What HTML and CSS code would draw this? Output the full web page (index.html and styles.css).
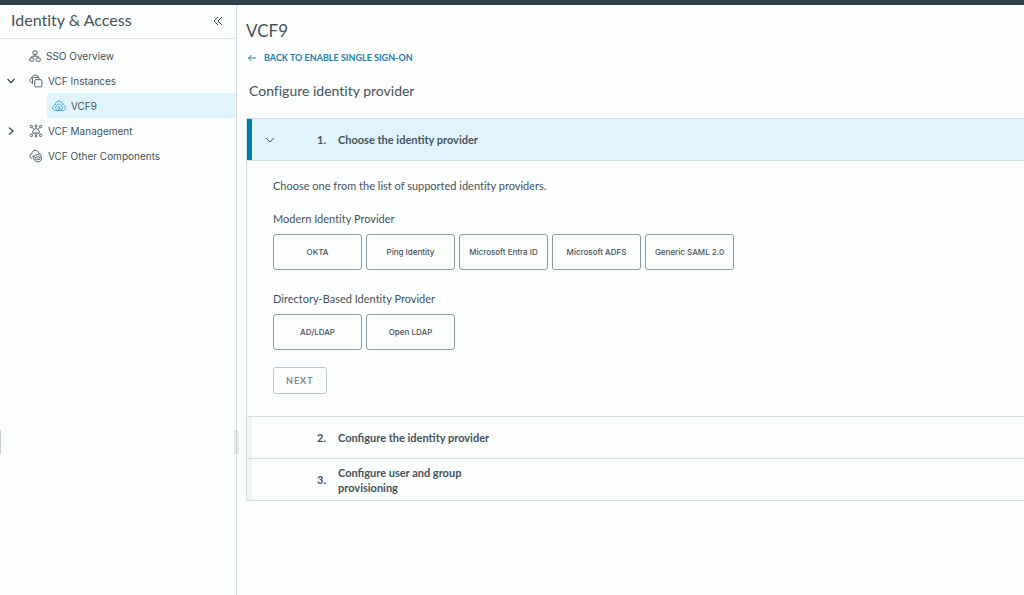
FILE: index.html
```html
<!DOCTYPE html>
<html lang="en">
<head>
  <meta charset="UTF-8">
  <meta name="viewport" content="width=device-width, initial-scale=1.0">
  <title>Identity &amp; Access</title>
  <link rel="stylesheet" href="styles.css">
</head>
<body>
  <div class="topbar"></div>

  <div class="layout">
    <aside class="sidebar">
      <div class="sidebar-header">
        <h2>Identity &amp; Access</h2>
        <button class="icon-btn" aria-label="Collapse">
          <svg width="10" height="10" viewBox="0 0 10 10"><path d="M5 1 1 5l4 4M9 1 5 5l4 4"/></svg>
        </button>
      </div>

      <nav class="tree">
        <div class="row">
          <a href="#" class="node">
            <svg width="12" height="12" viewBox="0 0 12 12"><rect x="4" y="1" width="4" height="3.5" rx=".6"/><rect x=".8" y="8" width="4" height="3.2" rx=".6"/><rect x="7.2" y="8" width="4" height="3.2" rx=".6"/><path d="M6 4.5v1.7M2.8 8V6.2h6.4V8"/></svg>
            SSO Overview
          </a>
        </div>
        <div class="row">
          <button class="icon-btn caret" aria-label="Collapse VCF Instances">
            <svg width="10" height="10" viewBox="0 0 10 10"><path d="m1.5 3 3.5 3.7L8.500 3"/></svg>
          </button>
          <a href="#" class="node">
            <svg width="14" height="14" viewBox="0 0 14 14"><path d="M3 8.500C.2 8.200.2 4.800 2.600 4.500 2.800.4 8.400.1 9.200 3"/><path d="M3.500 10V4.200q0-.8.8-.8h5.200q.8 0 .8.8v1"/><rect x="5.700" y="5.700" width="7.200" height="7.200" rx="1"/></svg>
            VCF Instances
          </a>
        </div>
        <a href="#" class="node selected">
          <svg width="14" height="14" viewBox="0 0 14 14"><path d="M3.500 11.500C-.4 11-.1 6.200 3.100 6 3.500.8 10.300.8 10.900 6c3.200.2 3.500 5 0 5.500z"/><path d="M4.500 10C2.800 9.500 3 7.500 4.600 7.400 4.800 4.200 9.200 4.200 9.400 7.400c1.600.1 1.800 2.100.2 2.600z"/><circle cx="7" cy="8.200" r=".7"/></svg>
          VCF9
        </a>
        <div class="row">
          <button class="icon-btn caret" aria-label="Expand VCF Management">
            <svg width="10" height="10" viewBox="0 0 10 10"><path d="m3 1.500 4 3.500-4 3.500"/></svg>
          </button>
          <a href="#" class="node">
            <svg width="14" height="14" viewBox="0 0 14 14"><circle cx="2.300" cy="2.500" r="1.200"/><circle cx="7" cy="2" r="1"/><circle cx="11.700" cy="2.500" r="1.200"/><circle cx="2.300" cy="11.500" r="1.200"/><circle cx="7" cy="12.200" r=".9"/><circle cx="11.700" cy="11.500" r="1.200"/><path d="M4.500 9c-1.600-.3-1.400-2.200 0-2.300.3-2.600 4.700-2.600 5 0 1.400.1 1.600 2 0 2.300zM3.200 3.400l1.800 2M10.800 3.400 9 5.400M3.200 10.600l1.400-1.500M10.800 10.600 9.400 9.100M7 3v1.700M7 9v2.300"/></svg>
            VCF Management
          </a>
        </div>
        <div class="row">
          <a href="#" class="node">
            <svg width="14" height="14" viewBox="0 0 14 14"><path d="M3.300 9.500C.1 9.300.1 5 2.900 4.900 3 .2 9.300.2 9.800 4.300c1.300.1 2.200.8 2.500 1.800"/><path d="M4.800 8.300C5.500 4.800 11.600 4.600 12.400 8.300c.8 3.200-1.200 4.500-3.400 4.500S4.500 11.500 4.800 8.300z"/><rect x="6.300" y="8" width="4.800" height="2.700" rx="1.200"/><path d="M3.300 7.300h2.200M7.900 9.200v.4M9.600 9.200v.4"/></svg>
            VCF Other Components
          </a>
        </div>
      </nav>
      <span class="edge-mark"></span>
      <span class="resize-handle"></span>
    </aside>

    <main class="content">
      <h1>VCF9</h1>
      <a href="#" class="back-link">
        <svg width="8" height="8" viewBox="0 0 8 8"><path d="M8 4H.7M3.500 1 .6 4l2.900 3"/></svg>
        BACK TO ENABLE SINGLE SIGN-ON
      </a>
      <h3>Configure identity provider</h3>

      <div class="stepper">
        <section class="step">
          <button class="step-header active">
            <svg width="10" height="10" viewBox="0 0 10 10"><path d="m1.200 3 3.800 4 3.800-4"/></svg>
            <span class="step-number">1.</span>
            <span class="step-title">Choose the identity provider</span>
          </button>
          <div class="step-body">
            <p>Choose one from the list of supported identity providers.</p>

            <h4>Modern Identity Provider</h4>
            <div class="cards">
              <button>OKTA</button>
              <button>Ping Identity</button>
              <button>Microsoft Entra ID</button>
              <button>Microsoft ADFS</button>
              <button>Generic SAML 2.0</button>
            </div>

            <h4>Directory-Based Identity Provider</h4>
            <div class="cards">
              <button>AD/LDAP</button>
              <button>Open LDAP</button>
            </div>

            <button class="next-btn" disabled>NEXT</button>
          </div>
        </section>
        <section class="step">
          <button class="step-header">
            <span class="step-number">2.</span>
            <span class="step-title">Configure the identity provider</span>
          </button>
        </section>
        <section class="step">
          <button class="step-header">
            <span class="step-number">3.</span>
            <span class="step-title">Configure user and group provisioning</span>
          </button>
        </section>
      </div>
    </main>
  </div>
</body>
</html>
```

FILE: styles.css
```css
* {
  box-sizing: border-box;
}

body {
  margin: 0;
  min-height: 100vh;
  display: flex;
  flex-direction: column;
  background: #fcfdfd;
  color: #45535b;
  font-family: Lato, "Open Sans", sans-serif;
  font-size: 11px;
  font-variant-ligatures: none;
}

h1, h2, h3, h4, p {
  margin: 0;
  font-weight: 400;
}

button {
  font-family: inherit;
  color: inherit;
  cursor: pointer;
}

a {
  color: inherit;
  text-decoration: none;
}

svg {
  flex: none;
  fill: none;
  stroke: currentColor;
}

.topbar {
  height: 5px;
  background: #2d4048;
}

.layout {
  flex: 1;
  display: flex;
}

/* sidebar */
.sidebar {
  position: relative;
  flex: none;
  width: 237px;
  border-right: 1px solid #d5dce0;
}

.sidebar-header {
  display: flex;
  align-items: center;
  justify-content: space-between;
  height: 34px;
  padding: 0 13px 2px 11px;
  border-bottom: 1px solid #dce2e6;
}

.sidebar-header h2 {
  padding-bottom: 3px;
  font-size: 16px;
}

.icon-btn {
  display: flex;
  padding: 0;
  border: none;
  background: none;
}

.tree {
  padding-top: 4px;
  font-family: Inter, sans-serif;
  font-size: 10px;
}

.row {
  display: flex;
  align-items: center;
  height: 25px;
  padding-left: 29px;
}

.caret {
  width: 23px;
  margin-left: -23px;
}

.caret svg {
  stroke-width: 1.4;
}

.node {
  display: flex;
  align-items: center;
  gap: 5px;
}

.node svg {
  stroke-width: 0.9;
}

.selected {
  height: 25px;
  margin-left: 47px;
  padding-left: 5px;
  border-radius: 2px 0 0 2px;
  background: #e0f4fe;
}

.selected svg {
  stroke: #359fd0;
}

.edge-mark,
.resize-handle {
  position: absolute;
  top: 425px;
  height: 24px;
}

.edge-mark {
  left: 0;
  width: 1px;
  background: #cbd3d8;
}

.resize-handle {
  right: -3px;
  width: 5px;
  background: rgba(205, 214, 219, 0.5);
}

/* main area */
.content {
  flex: 1;
  min-width: 0;
  padding: 16px 0 0 9px;
}

h1 {
  font-size: 17px;
  line-height: 20px;
}

.back-link {
  display: flex;
  align-items: center;
  gap: 8px;
  margin: 10px 0 0 2px;
  color: #1b80b2;
  font-size: 9px;
  line-height: 13px;
  font-weight: 700;
}

h3 {
  margin: 18px 0 18px 3px;
  font-size: 14px;
  line-height: 18px;
}

.stepper {
  border: 1px solid #d5dde1;
  border-right: none;
}

.step + .step {
  border-top: 1px solid #d5dde1;
}

.step-header {
  display: flex;
  align-items: center;
  width: 100%;
  height: 41px;
  padding: 0 0 0 65px;
  border: none;
  border-left: 5px solid #eff4f9;
  background: none;
  font-size: 11px;
  line-height: 15px;
  font-weight: 700;
  text-align: left;
}

.step-header.active {
  padding-left: 13px;
  border-left-color: #0079ad;
  background: #e0f4fe;
  box-shadow: 0 1px #d0e0e8;
}

.step-header.active svg {
  margin-right: 42px;
}

.step-number {
  width: 21px;
}

.step-title {
  width: 168px;
}

.step-body {
  padding: 18px 26px 22px;
}

.step-body p {
  line-height: 16px;
}

h4 {
  margin: 17px 0 7px;
  font-size: 11px;
  line-height: 16px;
}

.cards {
  display: flex;
  flex-wrap: wrap;
  gap: 4px;
}

.cards + h4 {
  margin-top: 21px;
}

.cards button {
  width: 89px;
  height: 36px;
  padding: 0;
  border: 1px solid #8b9ba6;
  border-radius: 3px;
  background: none;
  font-family: Inter, sans-serif;
  font-size: 8px;
  font-weight: 500;
}

.next-btn {
  height: 27px;
  margin-top: 17px;
  padding: 0 12px;
  border: 1px solid #bcc5cb;
  border-radius: 3px;
  background: none;
  color: #7d8a93;
  font-size: 9px;
  font-weight: 700;
  letter-spacing: 1px;
  cursor: default;
}
```
